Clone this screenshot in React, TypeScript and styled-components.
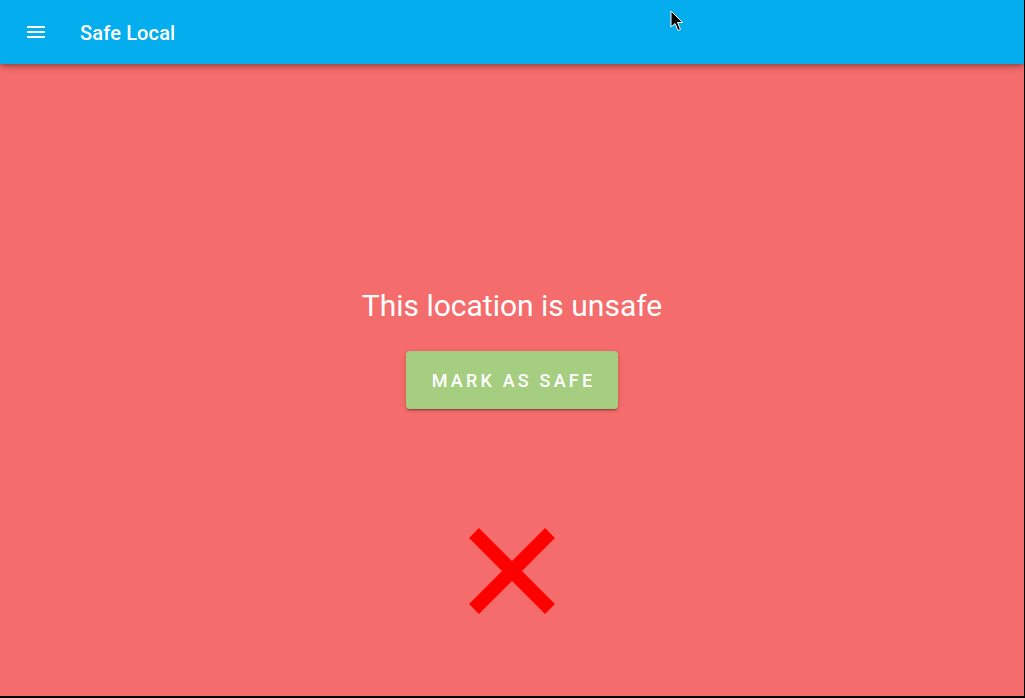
import React from 'react'
import styled, { createGlobalStyle } from 'styled-components'

const GlobalStyle = createGlobalStyle`
    html, body {
        margin: 0;
        padding: 0;
        height: 100%;
        background: #000;
        overflow: hidden;
    }
    #root {
        height: 100%;
    }
`

const Page = styled.div`
    position: relative;
    display: flex;
    flex-direction: column;
    width: calc(100% - 1px);
    height: calc(100% - 2px);
    background: #f46c6c;
    font-family: Roboto, 'Liberation Sans', sans-serif;
    color: #fff;
`

const AppBar = styled.header`
    position: relative;
    z-index: 1;
    display: flex;
    align-items: center;
    height: 64px;
    flex-shrink: 0;
    padding: 0 24px;
    background: #03adee;
    box-shadow: 0 2px 4px -1px rgba(0, 0, 0, 0.2), 0 4px 5px 0 rgba(0, 0, 0, 0.14),
        0 1px 10px 0 rgba(0, 0, 0, 0.12);
`

const MenuButton = styled.button`
    display: flex;
    align-items: center;
    justify-content: center;
    width: 24px;
    height: 24px;
    padding: 0;
    margin-top: -1px;
    border: none;
    background: none;
    color: #fff;
    cursor: pointer;
`

const Title = styled.h1`
    margin: 2px 0 0 32px;
    font-size: 20px;
    font-weight: 500;
    letter-spacing: 0.15px;
`

const Content = styled.main`
    flex: 1;
    display: flex;
    flex-direction: column;
    align-items: center;
    padding-top: 224px;
`

const Heading = styled.h2`
    margin: 0;
    font-size: 30px;
    font-weight: 400;
    line-height: 36px;
`

const SafeButton = styled.button`
    width: 212px;
    height: 58px;
    margin-top: 27px;
    padding: 0 0 0 3px;
    border: none;
    border-radius: 4px;
    background: #a6ce80;
    color: #fff;
    font-family: Roboto, 'Liberation Sans', sans-serif;
    font-size: 18px;
    font-weight: 500;
    letter-spacing: 3.2px;
    text-transform: uppercase;
    box-shadow: 0 3px 1px -2px rgba(0, 0, 0, 0.2), 0 2px 2px 0 rgba(0, 0, 0, 0.14),
        0 1px 5px 0 rgba(0, 0, 0, 0.12);
    cursor: pointer;
`

const Cross = styled.svg`
    margin-top: 118px;
    display: block;
`

const Pointer = styled.svg`
    position: absolute;
    left: 670px;
    top: 10px;
    z-index: 2;
`

export default function App() {
    return (
        <>
            <GlobalStyle />
            <Page>
                <AppBar>
                    <MenuButton aria-label="menu">
                        <svg width="24" height="24" viewBox="0 0 24 24" fill="currentColor">
                            <path d="M3 18h18v-2H3v2zm0-5h18v-2H3v2zm0-7v2h18V6H3z" />
                        </svg>
                    </MenuButton>
                    <Title>Safe Local</Title>
                </AppBar>
                <Content>
                    <Heading>This location is unsafe</Heading>
                    <SafeButton>Mark as safe</SafeButton>
                    <Cross width="88" height="88" viewBox="0 0 88 88">
                        <path d="M6 6 L82 82 M82 6 L6 82" stroke="#ff0000" strokeWidth="14" />
                    </Cross>
                </Content>
                <Pointer width="16" height="24" viewBox="0 0 16 24">
                    <path
                        d="M1 1 L1 17 L5 13.5 L8 20.5 L10.5 19.5 L7.5 12.5 L12.5 12.5 Z"
                        fill="#000"
                        stroke="#fff"
                        strokeWidth="1"
                    />
                </Pointer>
            </Page>
        </>
    )
}
